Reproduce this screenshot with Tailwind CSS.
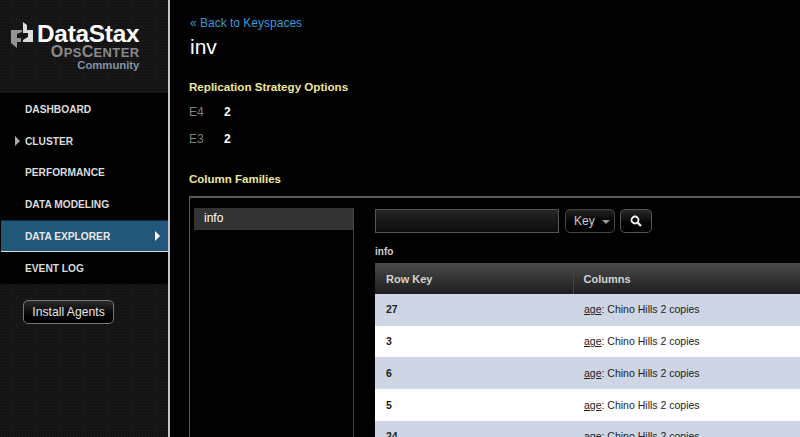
<!DOCTYPE html>
<html lang="en">
<head>
    <meta charset="UTF-8">
    <title>DataStax OpsCenter - Data Explorer</title>
    <script src="https://cdn.jsdelivr.net/npm/@tailwindcss/browser@4"></script>
</head>
<body class="bg-black">
<div class="flex w-[800px] h-[437px] overflow-hidden bg-black font-['Liberation_Sans',Arial,sans-serif]">

    <!-- Sidebar -->
    <aside class="w-[170px] h-full shrink-0 flex flex-col border-r-2 border-[#c8c8c8] bg-[#141414] bg-[radial-gradient(#1f1f1f_1px,transparent_1px)] bg-[length:3px_3px]">
        <!-- Logo -->
        <div class="h-[93px] shrink-0 flex justify-start pl-[11px] pt-[22px]">
            <svg class="w-[23px] h-[26px] shrink-0" viewBox="0 0 23 26">
                <path d="M0 8 L11 8 L11 10 L6 12 L6 16 L10 16 L10 20 L6 20 L6 26 L0 21 Z" fill="#949494"/>
                <path d="M12 0 L16 3 L16 8 L22 8 L22 20 L12 20 L12 18 L17 15 L17 11 L12 11 Z" fill="#dcdcdc"/>
            </svg>
            <div class="ml-[3px] flex flex-col items-end">
                <span class="text-[24.3px] leading-[24px] font-bold text-white tracking-[-0.2px]">DataStax</span>
                <span class="h-3 text-[13px] leading-3 font-bold tracking-[0.35px] text-[#8a8a8a]"><span class="text-[16px] leading-3">O</span>PS<span class="text-[16px] leading-3">C</span>ENTER</span>
                <span class="mt-px text-[11.3px] leading-[12px] font-bold text-[#8392a6]">Community</span>
            </div>
        </div>

        <!-- Nav -->
        <nav class="h-[191px] shrink-0 bg-black text-[10.2px] font-bold text-[#dcdcdc]">
            <a class="flex items-center h-8 pl-[25px] pt-px">DASHBOARD</a>
            <a class="relative flex items-center h-8 pl-[25px] pt-px">
                <span class="absolute left-[15px] top-[11px] border-y-[5px] border-y-transparent border-l-[5px] border-l-[#aaaaaa]"></span>
                CLUSTER
            </a>
            <a class="flex items-center h-[31px] pl-[25px] pt-px">PERFORMANCE</a>
            <a class="flex items-center h-8 pl-[25px] pt-px">DATA MODELING</a>
            <a class="relative flex items-center h-8 pl-6 pt-px ml-px bg-[#22577a] border-y border-t-[#0b2a44] border-b-[#d5dde3] text-[#e8e8e8]">
                DATA EXPLORER
                <span class="absolute left-[154px] top-[10px] border-y-[5px] border-y-transparent border-l-[5px] border-l-white"></span>
            </a>
            <a class="flex items-center h-8 pl-[25px] pt-px">EVENT LOG</a>
        </nav>

        <!-- Install Agents -->
        <div class="pl-[23px] pt-[15px]">
            <button class="w-[91px] h-6 rounded-[5px] border border-[#777777] bg-gradient-to-b from-[#2c2c2c] to-black text-[12.2px] text-[#e4e4e4]">Install Agents</button>
        </div>
    </aside>

    <!-- Main -->
    <main class="flex-1 min-w-0 pl-[19px] pt-4">
        <a class="block ml-px text-[12px] leading-[15px] text-[#3a9ad9]">« Back to Keyspaces</a>
        <h1 class="mt-1 ml-px text-[21px] leading-[24px] text-white">inv</h1>

        <h2 class="mt-5 text-[11.6px] leading-[15px] font-bold text-[#efe79a]">Replication Strategy Options</h2>
        <div class="mt-[10px] flex h-[15px] items-center text-[12px]">
            <span class="w-[35px] text-[#808080]">E4</span><span class="font-bold text-white">2</span>
        </div>
        <div class="mt-3 flex h-[15px] items-center text-[12px]">
            <span class="w-[35px] text-[#808080]">E3</span><span class="font-bold text-white">2</span>
        </div>
        <h2 class="mt-[26px] text-[11.5px] leading-[15px] font-bold text-[#efe79a]">Column Families</h2>

        <!-- Column family panel -->
        <section class="mt-[9px] flex h-[260px] border-l border-t-2 border-[#5a5a5a] pl-1 pt-[10px] -mr-[2px]">
            <div class="w-[160px] shrink-0 border-r border-[#444444]">
                <div class="h-[22px] bg-[#333333] pl-[10px] text-[12px] leading-[21px] text-white">info</div>
            </div>
            <div class="flex-1 min-w-0 pl-[21px] pt-px">
                <div class="flex items-stretch h-6">
                    <input class="w-[184px] border border-[#555555] bg-gradient-to-b from-[#262626] to-[#0c0c0c]">
                    <div class="ml-[6px] w-[50px] flex items-center pl-2 rounded-[5px] border border-[#444444] bg-gradient-to-b from-[#222222] to-black text-[12px] text-[#cccccc]">
                        Key
                        <span class="ml-[7px] mt-[2px] border-x-[4.5px] border-x-transparent border-t-[4.5px] border-t-[#999999]"></span>
                    </div>
                    <button class="ml-[5px] w-8 flex items-center justify-center rounded-[5px] border border-[#555555] bg-gradient-to-b from-[#2a2a2a] to-black">
                        <svg class="w-3 h-3" viewBox="0 0 12 12" fill="none" stroke="#f0f0f0">
                            <circle cx="5" cy="5" r="3.5" stroke-width="1.8"/>
                            <path d="M7.6 7.6 L11 11" stroke-width="2.4"/>
                        </svg>
                    </button>
                </div>
                <div class="mt-3 h-[18px] text-[10px] leading-[14px] font-bold text-[#cfcfcf]">info</div>

                <table class="w-[425px] table-fixed border-collapse text-[10.5px]">
                    <thead>
                        <tr class="h-[31px] bg-gradient-to-b from-[#4b4b4b] to-[#1e1e1e] text-left text-[11px] font-bold text-[#d4d4d4]">
                            <th class="w-[198px] pl-[11px] pt-px border-r border-[#444444]">Row Key</th>
                            <th class="pl-[10px] pt-px">Columns</th>
                        </tr>
                    </thead>
                    <tbody class="text-[#222222]">
                        <tr class="h-[31.7px] bg-[#ced5e4]"><td class="pl-[11px] pt-px font-bold">27</td><td class="pl-[11px] pt-px"><u>age</u>: Chino Hills 2 copies</td></tr>
                        <tr class="h-[31.7px] bg-white"><td class="pl-[11px] pt-px font-bold">3</td><td class="pl-[11px] pt-px"><u>age</u>: Chino Hills 2 copies</td></tr>
                        <tr class="h-[31.7px] bg-[#ced5e4]"><td class="pl-[11px] pt-px font-bold">6</td><td class="pl-[11px] pt-px"><u>age</u>: Chino Hills 2 copies</td></tr>
                        <tr class="h-[31.7px] bg-white"><td class="pl-[11px] pt-px font-bold">5</td><td class="pl-[11px] pt-px"><u>age</u>: Chino Hills 2 copies</td></tr>
                        <tr class="h-[31.7px] bg-[#ced5e4]"><td class="pl-[11px] pt-px font-bold">24</td><td class="pl-[11px] pt-px"><u>age</u>: Chino Hills 2 copies</td></tr>
                    </tbody>
                </table>
            </div>
        </section>
    </main>
</div>
</body>
</html>
